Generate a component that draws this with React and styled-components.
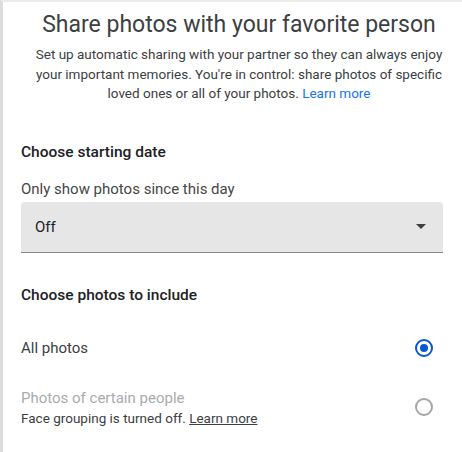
import React from 'react';
import styled, { createGlobalStyle } from 'styled-components';

const GlobalStyle = createGlobalStyle`
  html, body {
    margin: 0;
    padding: 0;
    background: #fff;
  }
  body {
    font-family: Roboto, "Noto Sans", Arial, sans-serif;
    -webkit-font-smoothing: antialiased;
  }
`;

const Card = styled.div`
  box-sizing: border-box;
  width: 462px;
  height: 452px;
  overflow: hidden;
  border-left: 3px solid #dcdcdc;
  border-top: 2px solid #ececec;
  padding: 0 19px 0 18px;
  background: #fff;
`;

const Header = styled.div`
  text-align: center;
  padding-left: 14px;
`;

const Title = styled.h1`
  margin: 8px 0 0;
  font-size: 23px;
  line-height: 30px;
  font-weight: 400;
  color: #3c4043;
  white-space: nowrap;
`;

const Intro = styled.p`
  margin: 5px 0 0;
  font-size: 13.5px;
  line-height: 19.5px;
  color: #3c4043;
`;

const Link = styled.a`
  color: ${({ underline }) => (underline ? '#3c4043' : '#1a73e8')};
  text-decoration: ${({ underline }) => (underline ? 'underline' : 'none')};
  cursor: pointer;
`;

const SectionTitle = styled.h2`
  margin: ${({ top }) => top}px 0 0;
  font-size: 15.5px;
  line-height: 20px;
  font-weight: 500;
  color: #202124;
`;

const FieldLabel = styled.div`
  margin-top: 17px;
  font-size: 15px;
  line-height: 20px;
  color: #444746;
`;

const Select = styled.div`
  margin-top: 3px;
  height: 50px;
  display: flex;
  align-items: center;
  justify-content: space-between;
  padding: 0 17px 0 14px;
  background: #e6e6e6;
  border-radius: 4px 4px 0 0;
  border-bottom: 1.5px solid #8a8a8a;
  font-size: 15px;
  color: #202124;
`;

const Caret = styled.span`
  width: 0;
  height: 0;
  border-left: 5px solid transparent;
  border-right: 5px solid transparent;
  border-top: 5px solid #3c4043;
`;

const Option = styled.label`
  display: flex;
  align-items: center;
  justify-content: space-between;
  margin-top: ${({ top }) => top}px;
  padding-right: 10px;
`;

const OptionText = styled.div`
  display: flex;
  flex-direction: column;
`;

const OptionLabel = styled.span`
  font-size: 15px;
  line-height: 20px;
  color: ${({ disabled }) => (disabled ? '#a8abae' : '#3c4043')};
`;

const OptionHint = styled.span`
  margin-top: 1px;
  font-size: 13.5px;
  line-height: 18px;
  color: #3c4043;
`;

const Radio = styled.span`
  box-sizing: border-box;
  width: 18px;
  height: 18px;
  border-radius: 50%;
  border: 2px solid ${({ checked }) => (checked ? '#0b57d0' : '#a6a6a6')};
  display: flex;
  align-items: center;
  justify-content: center;

  &::after {
    content: '';
    width: 8px;
    height: 8px;
    border-radius: 50%;
    background: #0b57d0;
    display: ${({ checked }) => (checked ? 'block' : 'none')};
  }
`;

const App = () => {
  return (
    <>
      <GlobalStyle />
      <Card>
        <Header>
          <Title>Share photos with your favorite person</Title>
          <Intro>
            Set up automatic sharing with your partner so they can always enjoy
            your important memories. You're in control: share photos of specific
            loved ones or all of your photos. <Link>Learn more</Link>
          </Intro>
        </Header>

        <SectionTitle top={38}>Choose starting date</SectionTitle>
        <FieldLabel>Only show photos since this day</FieldLabel>
        <Select>
          <span>Off</span>
          <Caret />
        </Select>

        <SectionTitle top={32}>Choose photos to include</SectionTitle>
        <Option top={33}>
          <OptionText>
            <OptionLabel>All photos</OptionLabel>
          </OptionText>
          <Radio checked />
        </Option>
        <Option top={30}>
          <OptionText>
            <OptionLabel disabled>Photos of certain people</OptionLabel>
            <OptionHint>
              Face grouping is turned off. <Link underline>Learn more</Link>
            </OptionHint>
          </OptionText>
          <Radio />
        </Option>
      </Card>
    </>
  );
};

export default App;
